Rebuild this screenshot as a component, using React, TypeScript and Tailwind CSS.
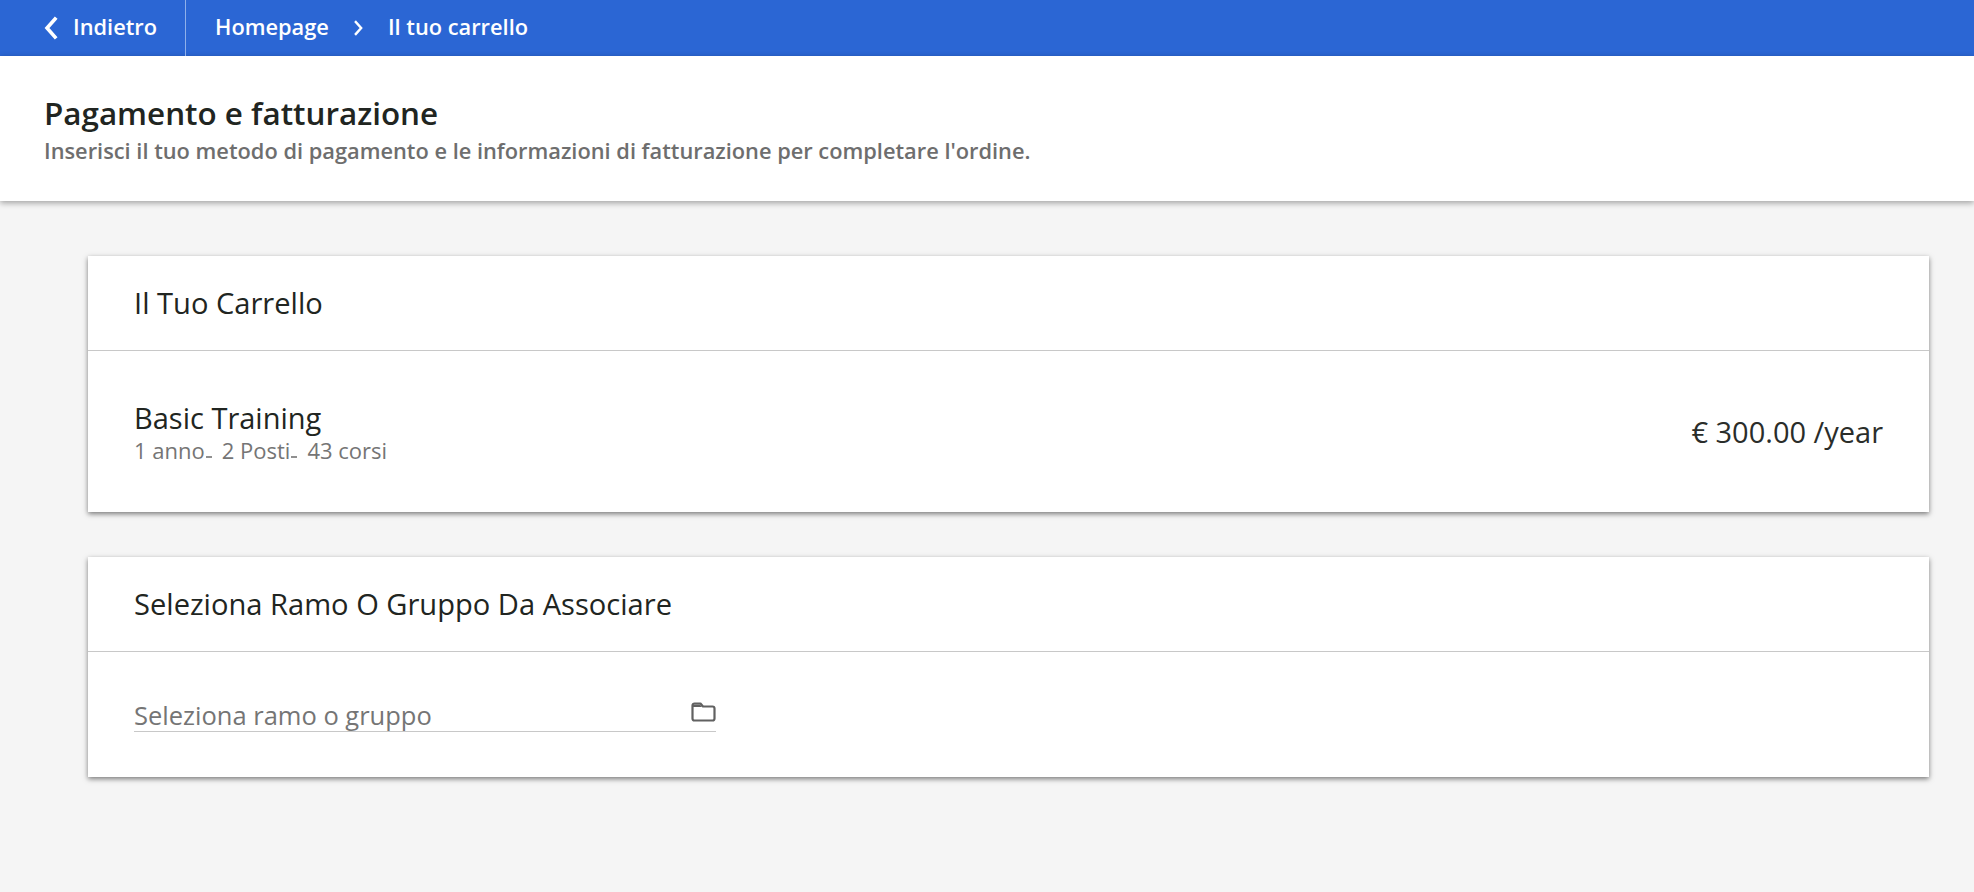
import React from 'react';

const font = "[font-family:'Open_Sans',sans-serif]";

const Chevron: React.FC<{ dir: 'left' | 'right'; className?: string }> = ({ dir, className }) => (
  <svg viewBox="0 0 16 24" className={className} fill="none" stroke="currentColor" strokeWidth="3.6" strokeLinecap="square" strokeLinejoin="miter">
    <path d={dir === 'left' ? 'M12 3 L4 12 L12 21' : 'M4 3 L12 12 L4 21'} />
  </svg>
);

const FolderIcon: React.FC = () => (
  <svg viewBox="0 0 25 20" className="w-[25px] h-[20px] mt-[6px] text-[#616161]" fill="none" stroke="currentColor" strokeWidth="2.2" strokeLinejoin="round">
    <path d="M1.5 3.5 a2 2 0 0 1 2-2 h6 l2.5 3 h9.5 a2 2 0 0 1 2 2 v10 a2 2 0 0 1-2 2 h-18 a2 2 0 0 1-2-2 z" />
    <path d="M2 2.5 h7 l2 2.5 h-9 z" fill="currentColor" stroke="none" />
  </svg>
);

const Card: React.FC<{ title: string; bodyClass: string; children: React.ReactNode }> = ({ title, bodyClass, children }) => (
  <section className="bg-white shadow-[0_2px_5px_rgba(0,0,0,0.5)]">
    <h2 className="h-[95px] px-[46px] pt-[2px] flex items-center border-b border-[#c8c8c8] text-[29.1px] font-normal text-[#212521]">{title}</h2>
    <div className={bodyClass}>{children}</div>
  </section>
);

const Dash: React.FC = () => <span className="shrink-0 ml-[1px] mr-[10px] w-[6px] h-[2px] bg-[#909090] self-end mb-[6px]" />;

export default function App() {
  return (
    <div className={`min-h-[892px] bg-[#f5f5f5] ${font}`}>
      <nav className="h-[56px] bg-[#2b66d4] text-white flex items-center text-[21.8px] font-semibold">
        <div className="h-full w-[186px] flex items-center pl-[43px] border-r border-[#8fb0ea]">
          <Chevron dir="left" className="w-[16px] h-[24px]" />
          <span className="ml-[14px] mb-[2px]">Indietro</span>
        </div>
        <span className="ml-[29px] mb-[2px]">Homepage</span>
        <Chevron dir="right" className="w-[11px] h-[16px] ml-[24px]" />
        <span className="ml-[24px] mb-[2px]">Il tuo carrello</span>
      </nav>

      <header className="h-[145px] bg-white pl-[44px] pt-[37px] shadow-[0_2px_6px_rgba(0,0,0,0.35)]">
        <h1 className="text-[31.4px] leading-[40px] font-semibold text-[#212521]">Pagamento e fatturazione</h1>
        <p className="text-[21.8px] leading-[36px] font-semibold text-[#6e6e6e]">
          Inserisci il tuo metodo di pagamento e le informazioni di fatturazione per completare l'ordine.
        </p>
      </header>

      <main className="pt-[55px] pl-[88px] pr-[45px] flex flex-col gap-[45px]">
        <Card title="Il Tuo Carrello" bodyClass="h-[161px] px-[46px] flex items-center justify-between">
          <div>
            <div className="text-[29px] leading-[36px] text-[#212521]">Basic Training</div>
            <div className="text-[22px] leading-[28px] text-[#757575] flex">
              <span>1 anno</span>
              <Dash />
              <span>2 Posti</span>
              <Dash />
              <span>43 corsi</span>
            </div>
          </div>
          <div className="text-[29px] text-[#2a2d2a]">€ 300.00 /year</div>
        </Card>

        <Card title="Seleziona Ramo O Gruppo Da Associare" bodyClass="h-[125px] px-[46px] pt-[44px]">
          <div className="w-[582px] h-[36px] border-b border-[#c8c8c8] flex items-start justify-between">
            <span className="text-[25.5px] leading-[38px] text-[#757575]">Seleziona ramo o gruppo</span>
            <FolderIcon />
          </div>
        </Card>
      </main>
    </div>
  );
}
